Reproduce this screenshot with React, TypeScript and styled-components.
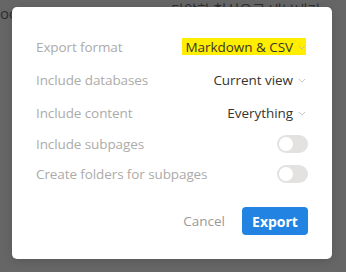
import React, { useState } from 'react';
import styled, { createGlobalStyle } from 'styled-components';

const GlobalStyle = createGlobalStyle`
  html, body {
    margin: 0;
    padding: 0;
    background: #666666;
  }
  body {
    font-family: "Open Sans", "Noto Sans", sans-serif;
    -webkit-font-smoothing: antialiased;
  }
`;

type ExportOptions = {
  format: string;
  databases: string;
  content: string;
  subpages: boolean;
  folders: boolean;
};

const App: React.FC = () => {
  const [options, setOptions] = useState<ExportOptions>({
    format: 'Markdown & CSV',
    databases: 'Current view',
    content: 'Everything',
    subpages: false,
    folders: false,
  });

  return (
    <>
      <GlobalStyle />
      <Backdrop>
        <BehindText>
          <span>od</span>
          <span>一</span>
          <span>다양한 형식으로 내보내기</span>
        </BehindText>
        <Dialog>
          <Rows>
            <Row>
              <Label>Export format</Label>
              <Select highlighted>
                {options.format}
                <Chevron />
              </Select>
            </Row>
            <Row>
              <Label>Include databases</Label>
              <Select>
                {options.databases}
                <Chevron />
              </Select>
            </Row>
            <Row>
              <Label>Include content</Label>
              <Select>
                {options.content}
                <Chevron />
              </Select>
            </Row>
            <Row compact>
              <Label>Include subpages</Label>
              <Toggle
                on={options.subpages}
                onClick={() => setOptions({ ...options, subpages: !options.subpages })}
              />
            </Row>
            <Row compact>
              <Label>Create folders for subpages</Label>
              <Toggle
                on={options.folders}
                onClick={() => setOptions({ ...options, folders: !options.folders })}
              />
            </Row>
          </Rows>
          <Footer>
            <CancelButton>Cancel</CancelButton>
            <ExportButton>Export</ExportButton>
          </Footer>
        </Dialog>
      </Backdrop>
    </>
  );
};

const Chevron: React.FC = () => (
  <ChevronSvg viewBox="0 0 10 6" width="8" height="5">
    <path d="M1 1 L5 5 L9 1" fill="none" stroke="#b8b8b5" strokeWidth="1" />
  </ChevronSvg>
);

type ToggleProps = { on: boolean; onClick: () => void };

const Toggle: React.FC<ToggleProps> = ({ on, onClick }) => (
  <Track on={on} onClick={onClick}>
    <Knob on={on} />
  </Track>
);

export default App;

const Backdrop = styled.div`
  position: relative;
  width: 346px;
  height: 272px;
  overflow: hidden;
  background: #666666;
  padding: 7px 14px 0 12px;
  box-sizing: border-box;
`;

const BehindText = styled.div`
  position: absolute;
  top: 3px;
  left: 0;
  display: flex;
  align-items: flex-start;
  gap: 14px;
  white-space: nowrap;
  font-size: 15px;
  color: #2e2e2e;
  font-family: "Open Sans", "Noto Sans CJK KR", sans-serif;

  & > span:last-child {
    margin-left: 110px;
    margin-top: -4px;
    font-size: 14px;
  }
`;

const Dialog = styled.div`
  position: relative;
  width: 320px;
  height: 252px;
  box-sizing: border-box;
  background: #ffffff;
  border-radius: 5px;
  padding: 23px 24px 0 24px;
  display: flex;
  flex-direction: column;
  box-shadow: 0 2px 8px rgba(0, 0, 0, 0.15);
`;

const Rows = styled.div`
  display: flex;
  flex-direction: column;
`;

const Row = styled.div<{ compact?: boolean }>`
  display: flex;
  align-items: center;
  justify-content: space-between;
  height: ${(p) => (p.compact ? '30px' : '33px')};
`;

const Label = styled.span`
  font-size: 13.5px;
  color: #acaba9;
  letter-spacing: -0.1px;
`;

const Select = styled.span<{ highlighted?: boolean }>`
  display: inline-flex;
  align-items: center;
  gap: 5px;
  height: 17px;
  padding-left: ${(p) => (p.highlighted ? '4px' : '1px')};
  margin-right: 2px;
  font-size: 13.5px;
  color: #37352f;
  letter-spacing: -0.05px;
  background: ${(p) => (p.highlighted ? '#ffee00' : 'transparent')};
  cursor: pointer;
`;

const ChevronSvg = styled.svg`
  display: block;
  margin-top: 1px;
`;

const Track = styled.div<{ on: boolean }>`
  position: relative;
  width: 31px;
  height: 18px;
  border-radius: 9px;
  background: ${(p) => (p.on ? '#2383e2' : '#e3e2e0')};
  cursor: pointer;
`;

const Knob = styled.div<{ on: boolean }>`
  position: absolute;
  top: 2px;
  left: ${(p) => (p.on ? '15px' : '2px')};
  width: 14px;
  height: 14px;
  border-radius: 50%;
  background: #ffffff;
`;

const Footer = styled.div`
  display: flex;
  justify-content: flex-end;
  align-items: center;
  gap: 17px;
  margin-top: 18px;
`;

const CancelButton = styled.button`
  border: none;
  background: none;
  padding: 0;
  font-family: inherit;
  font-size: 13.5px;
  color: #9b9a97;
  cursor: pointer;
`;

const ExportButton = styled.button`
  width: 66px;
  height: 28px;
  border: none;
  border-radius: 4px;
  background: #2383e2;
  color: #ffffff;
  font-family: inherit;
  font-size: 14px;
  font-weight: 700;
  cursor: pointer;
`;
